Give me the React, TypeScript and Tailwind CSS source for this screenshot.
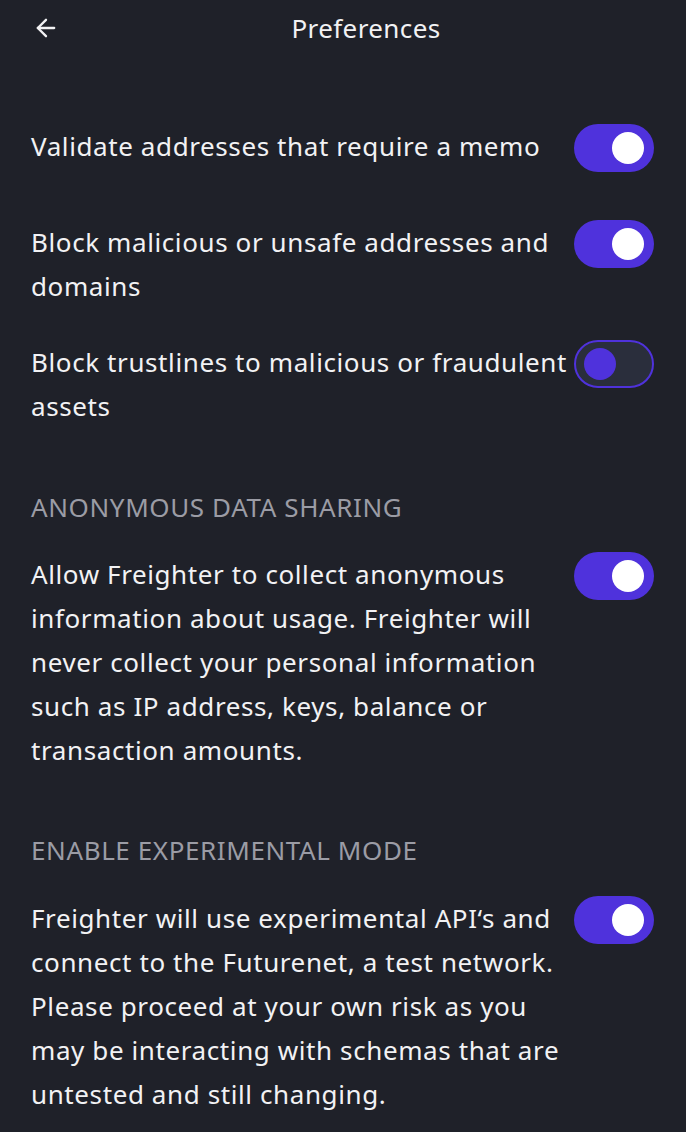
import { ArrowLeft } from "lucide-react"

type Row = { label: string; on: boolean }

function Toggle({ on }: { on: boolean }) {
  if (on) {
    return (
      <div className="flex h-[48px] w-[80px] shrink-0 items-center justify-end rounded-full bg-[#4f32dc] pr-[10px]">
        <div className="h-[32px] w-[32px] rounded-full bg-white" />
      </div>
    )
  }
  return (
    <div className="flex h-[48px] w-[80px] shrink-0 items-center rounded-full border-2 border-[#4f32dc] bg-[#2a2e3c] pl-[8px]">
      <div className="h-[32px] w-[32px] rounded-full bg-[#4f32dc]" />
    </div>
  )
}

function SettingRow({ label, on, className = "" }: Row & { className?: string }) {
  return (
    <div className={`flex items-start justify-between gap-[6px] ${className}`}>
      <p className="flex-1">{label}</p>
      <Toggle on={on} />
    </div>
  )
}

export default function App() {
  return (
    <div
      className="min-h-[1132px] w-full bg-[#1f2129] text-[26px] leading-[44px] tracking-[0.6px] text-[#f2f2f4]"
      style={{ fontFamily: '"Noto Sans", "Open Sans", sans-serif' }}
    >
      {/* Header */}
      <div className="relative flex h-[56px] items-center justify-center pl-[46px]">
        <ArrowLeft className="absolute left-[32px] top-[14px]" size={28} strokeWidth={2} />
        <h1 className="text-[26px] tracking-[0.4px]">Preferences</h1>
      </div>

      <div className="pl-[31px] pr-[32px] pt-[68px]">
        <SettingRow label="Validate addresses that require a memo" on />
        <SettingRow className="mt-[48px]" label="Block malicious or unsafe addresses and domains" on />
        <SettingRow className="mt-[32px]" label="Block trustlines to malicious or fraudulent assets" on={false} />

        <h2 className="mt-[57px] text-[#9b9ca5]">ANONYMOUS DATA SHARING</h2>
        <SettingRow
          className="mt-[23px]"
          label="Allow Freighter to collect anonymous information about usage. Freighter will never collect your personal information such as IP address, keys, balance or transaction amounts."
          on
        />

        <h2 className="mt-[56px] text-[#9b9ca5]">ENABLE EXPERIMENTAL MODE</h2>
        <SettingRow
          className="mt-[24px]"
          label="Freighter will use experimental API‘s and connect to the Futurenet, a test network. Please proceed at your own risk as you may be interacting with schemas that are untested and still changing."
          on
        />
      </div>
    </div>
  )
}
